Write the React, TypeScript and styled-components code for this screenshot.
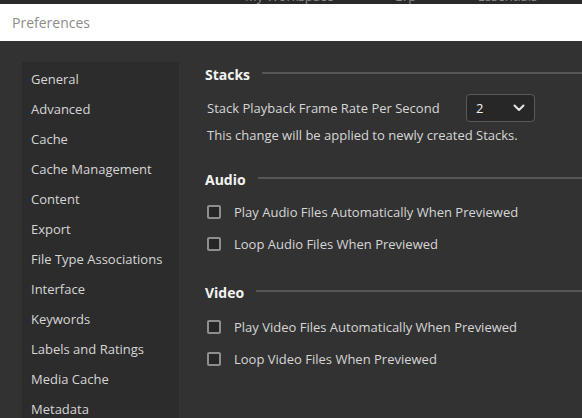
import { createGlobalStyle } from "styled-components";
import styled from "styled-components";

const GlobalStyle = createGlobalStyle`
  html, body {
    margin: 0;
    padding: 0;
    background: #323232;
    font-family: "Open Sans", "Noto Sans", sans-serif;
    overflow: hidden;
  }
`;

const Window = styled.div`
  width: 582px;
  height: 418px;
  display: flex;
  flex-direction: column;
  background: #323232;
  overflow: hidden;
`;

const AppStrip = styled.div`
  height: 4px;
  background: #2a2a2a;
  overflow: hidden;
  display: flex;
  padding-left: 245px;
  color: #8a8a8a;
  font-size: 13px;
  line-height: 15px;
`;

const StripItem = styled.span<{ $gap: number }>`
  margin-top: -11px;
  margin-left: ${({ $gap }) => $gap}px;
  white-space: nowrap;
`;

const TitleBar = styled.div`
  height: 37px;
  background: #ffffff;
  display: flex;
  align-items: center;
  padding-left: 12px;
  color: #8c8c8c;
  font-size: 14px;
`;

const Body = styled.div`
  flex: 1;
  display: flex;
  padding: 21px 0 0 22px;
  min-height: 0;
`;

const Sidebar = styled.ul`
  list-style: none;
  margin: 0;
  padding: 2px 0 0 0;
  width: 157px;
  background: #2c2c2c;
  flex-shrink: 0;
`;

const NavItem = styled.li`
  height: 30px;
  line-height: 30px;
  padding-left: 9px;
  color: #d6d6d6;
  font-size: 13px;
  white-space: nowrap;
`;

const Content = styled.div`
  flex: 1;
  padding: 2px 0 0 26px;
  color: #d6d6d6;
  font-size: 13px;
`;

const Section = styled.section<{ $gap: number }>`
  margin-bottom: ${({ $gap }) => $gap}px;
`;

const SectionHeader = styled.div<{ $after: number }>`
  display: flex;
  align-items: center;
  gap: 12px;
  height: 20px;
  color: #f2f2f2;
  font-size: 14px;
  font-weight: 700;
  margin-bottom: ${({ $after }) => $after}px;

  &::after {
    content: "";
    flex: 1;
    height: 2px;
    background: #565656;
    margin-top: -2px;
  }
`;

const FieldRow = styled.div`
  display: flex;
  align-items: center;
  height: 28px;
  padding-left: 2px;
`;

const FieldLabel = styled.span`
  width: 259px;
`;

const Select = styled.div`
  box-sizing: border-box;
  width: 69px;
  height: 28px;
  border: 1px solid #5a5a5a;
  border-radius: 4px;
  background: #272727;
  display: flex;
  align-items: center;
  justify-content: space-between;
  padding: 0 9px;
  color: #f0f0f0;
`;

const Note = styled.div`
  line-height: 20px;
  padding-left: 2px;
  margin-top: 3px;
`;

const CheckRow = styled.label`
  display: flex;
  align-items: center;
  gap: 13px;
  height: 32px;
  padding-left: 2px;
`;

const Box = styled.span`
  width: 10px;
  height: 10px;
  border: 2px solid #8e8e8e;
  border-radius: 2px;
  background: #262626;
`;

const Chevron = () => (
  <svg width="12" height="8" viewBox="0 0 12 8">
    <path d="M1.5 1.5 L6 6 L10.5 1.5" fill="none" stroke="#e6e6e6" strokeWidth="2" strokeLinecap="round" strokeLinejoin="round" />
  </svg>
);

const navItems = [
  "General",
  "Advanced",
  "Cache",
  "Cache Management",
  "Content",
  "Export",
  "File Type Associations",
  "Interface",
  "Keywords",
  "Labels and Ratings",
  "Media Cache",
  "Metadata",
];

export default function App() {
  return (
    <>
      <GlobalStyle />
      <Window>
        <AppStrip>
          <StripItem $gap={0}>My Workspace</StripItem>
          <StripItem $gap={60}>Grp</StripItem>
          <StripItem $gap={24}>≡</StripItem>
          <StripItem $gap={30}>Essentials</StripItem>
        </AppStrip>
        <TitleBar>Preferences</TitleBar>
        <Body>
          <Sidebar>
            {navItems.map((item) => (
              <NavItem key={item}>{item}</NavItem>
            ))}
          </Sidebar>
          <Content>
            <Section $gap={24}>
              <SectionHeader $after={10}>Stacks</SectionHeader>
              <FieldRow>
                <FieldLabel>Stack Playback Frame Rate Per Second</FieldLabel>
                <Select>
                  <span>2</span>
                  <Chevron />
                </Select>
              </FieldRow>
              <Note>This change will be applied to newly created Stacks.</Note>
            </Section>
            <Section $gap={22}>
              <SectionHeader $after={7}>Audio</SectionHeader>
              <CheckRow>
                <Box />
                Play Audio Files Automatically When Previewed
              </CheckRow>
              <CheckRow>
                <Box />
                Loop Audio Files When Previewed
              </CheckRow>
            </Section>
            <Section $gap={0}>
              <SectionHeader $after={9}>Video</SectionHeader>
              <CheckRow>
                <Box />
                Play Video Files Automatically When Previewed
              </CheckRow>
              <CheckRow>
                <Box />
                Loop Video Files When Previewed
              </CheckRow>
            </Section>
          </Content>
        </Body>
      </Window>
    </>
  );
}
